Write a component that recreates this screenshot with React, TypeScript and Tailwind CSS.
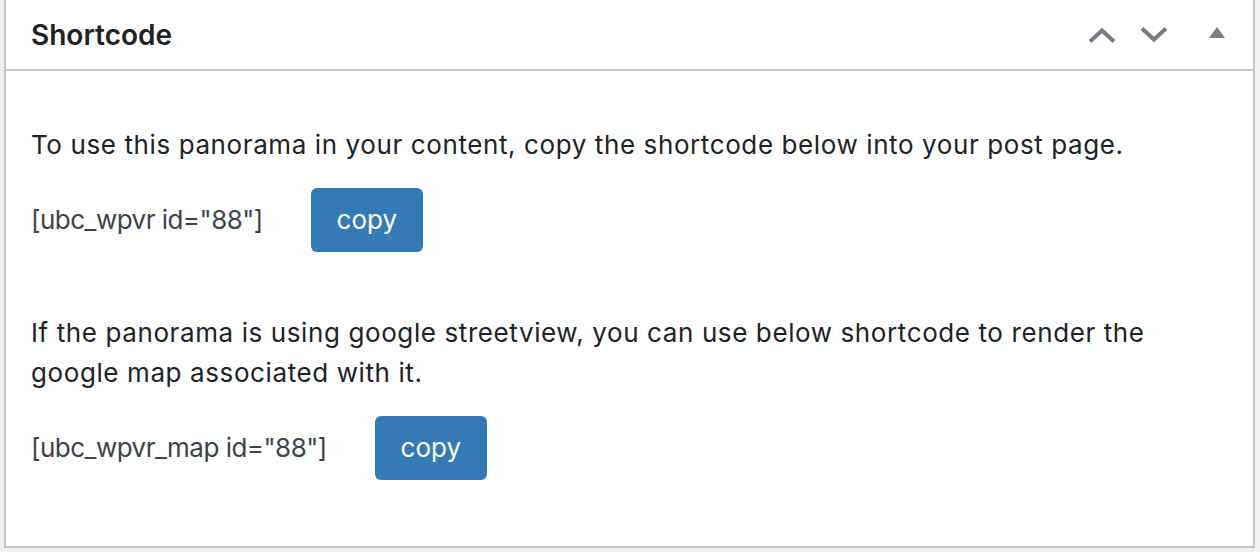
import { useState } from "react";

const shortcodes = [
  {
    text: "To use this panorama in your content, copy the shortcode below into your post page.",
    code: '[ubc_wpvr id="88"]',
  },
  {
    text: "If the panorama is using google streetview, you can use below shortcode to render the google map associated with it.",
    code: '[ubc_wpvr_map id="88"]',
  },
];

function ShortcodeRow({ code }: { code: string }) {
  const [copied, setCopied] = useState(false);
  return (
    <div className="flex items-center">
      <span className="text-[26px] leading-[40px] text-[#3c434a] tracking-[-0.52px]">{code}</span>
      <button
        className="ml-[48px] h-[64px] w-[112px] rounded-[6px] bg-[#337ab7] text-[26px] text-white"
        onClick={() => setCopied(true)}
      >
        {copied ? "copied" : "copy"}
      </button>
    </div>
  );
}

export default function App() {
  return (
    <div className="h-[552px] bg-[#f0f0f1] pl-[4px] pr-[5px] pb-[4px] font-['Inter','Liberation_Sans',sans-serif]">
      <div className="h-full border-2 border-t-0 border-[#c3c4c7] bg-white">
        <div className="flex h-[71px] items-center border-b-2 border-[#c3c4c7] pl-[25px]">
          <h2 className="flex-1 text-[28px] font-semibold text-[#1d2327]">Shortcode</h2>
          <button className="flex h-full w-[52px] items-center justify-center">
            <svg width="28" height="16" viewBox="0 0 28 16">
              <path d="M2 14.5 L14 3.5 L26 14.5" fill="none" stroke="#787c82" strokeWidth="4" />
            </svg>
          </button>
          <button className="flex h-full w-[52px] items-center justify-center">
            <svg width="28" height="16" viewBox="0 0 28 16">
              <path d="M2 1.5 L14 12.5 L26 1.5" fill="none" stroke="#787c82" strokeWidth="4" />
            </svg>
          </button>
          <button className="flex h-full w-[73px] items-center justify-center">
            <svg width="16" height="12" viewBox="0 0 16 12" className="-mt-[4px]">
              <path d="M8 0 L16 11 L0 11 Z" fill="#787c82" />
            </svg>
          </button>
        </div>
        <div className="pl-[25px] pt-[54px] text-[26px] leading-[40px] text-[#1d2327]">
          {shortcodes.map((s, i) => (
            <div key={i} className={i > 0 ? "mt-[61px]" : ""}>
              <p className="max-w-[1140px] tracking-[0.6px]">{s.text}</p>
              <div className="mt-[23px]">
                <ShortcodeRow code={s.code} />
              </div>
            </div>
          ))}
        </div>
      </div>
    </div>
  );
}
